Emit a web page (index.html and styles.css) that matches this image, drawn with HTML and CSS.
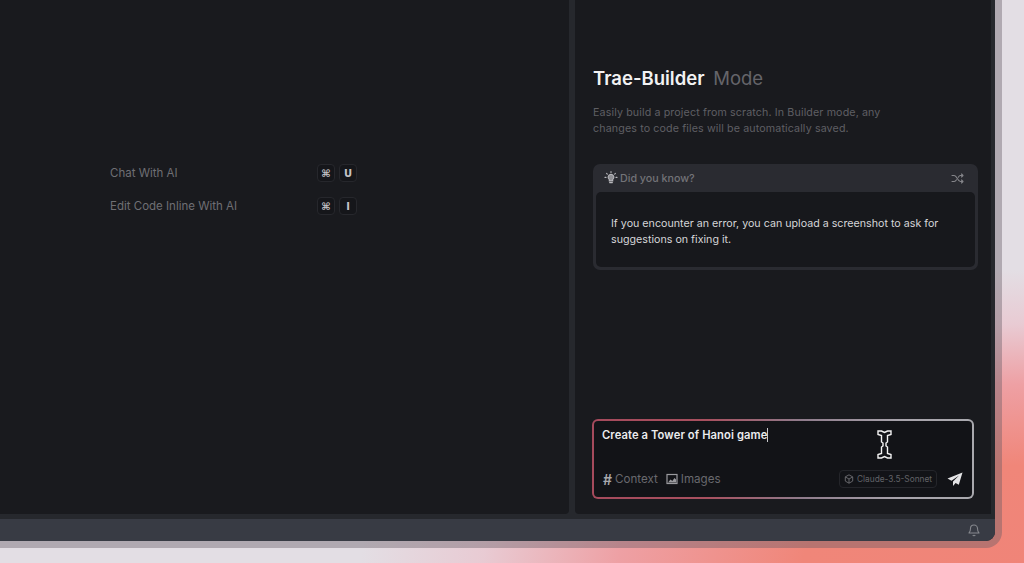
FILE: index.html
```html
<!DOCTYPE html>
<html lang="en">
<head>
    <meta charset="UTF-8">
    <meta name="viewport" content="width=device-width, initial-scale=1.0">
    <title>Trae Builder</title>
    <link rel="stylesheet" href="styles.css">
</head>
<body>
    <div class="window">
        <div class="panels">
            <div class="editor">
                <div class="shortcuts">
                    <div class="shortcut">
                        <span>Chat With AI</span>
                        <div class="keys"><kbd>⌘</kbd><kbd>U</kbd></div>
                    </div>
                    <div class="shortcut">
                        <span>Edit Code Inline With AI</span>
                        <div class="keys"><kbd>⌘</kbd><kbd>I</kbd></div>
                    </div>
                </div>
            </div>
            <div class="builder">
                <h1>Trae-Builder <span>Mode</span></h1>
                <p class="intro">Easily build a project from scratch. In Builder mode, any changes to code files will be automatically saved.</p>

                <div class="tip">
                    <div class="tip-head">
                        <svg class="bulb" width="14" height="14" viewBox="0 0 14 14" fill="none" stroke="#b9b9bd" stroke-width="1.1" stroke-linecap="round">
                            <path d="M7 3.2a3 3 0 0 0-1.7 5.4v1.3h3.4V8.6A3 3 0 0 0 7 3.2z" fill="#8f8f94"/>
                            <path d="M5.6 11.6h2.8M7 .6v1M2.6 2.4l.7.7M11.4 2.4l-.7.7M1 6.4h1M12 6.4h1"/>
                        </svg>
                        <span>Did you know?</span>
                        <svg class="shuffle" width="13" height="13" viewBox="0 0 13 13" fill="none" stroke="#85858a" stroke-width="1.1" stroke-linecap="round" stroke-linejoin="round">
                            <path d="M1 3.5h2.2c2.8 0 3.4 6 6.2 6H12M1 9.5h2.2c1 0 1.700-.7 2.300-1.700M7.300 5.200c.6-1 1.200-1.700 2.100-1.700H12M10.500 2L12 3.500 10.500 5M10.500 8L12 9.500 10.500 11"/>
                        </svg>
                    </div>
                    <div class="tip-body">If you encounter an error, you can upload a screenshot to ask for suggestions on fixing it.</div>
                </div>

                <div class="composer">
                    <div class="prompt">Create a Tower of Hanoi game<i class="caret"></i></div>
                    <div class="composer-foot">
                        <span class="tool"><b class="hash">#</b>Context</span>
                        <span class="tool">
                            <svg width="12" height="12" viewBox="0 0 12 12" fill="none" stroke="#9a9a9e" stroke-width="1.200">
                                <rect x="1" y="1.500" width="10" height="9"/>
                                <path d="M2 9.500l2.500-3 1.800 1.500L8.500 5l1.500 1.500v3z" fill="#9a9a9e" stroke="none"/>
                            </svg>
                            Images
                        </span>
                        <span class="model">
                            <svg width="10" height="10" viewBox="0 0 10 10" fill="none" stroke="#6e6e73" stroke-width=".9" stroke-linejoin="round">
                                <path d="M5 .8l3.700 2.100v4.200L5 9.200 1.300 7.100V2.900zM1.300 2.900L5 5l3.700-2.100M5 5v4.200"/>
                            </svg>
                            Claude-3.5-Sonnet
                        </span>
                        <svg class="send" width="16" height="15" viewBox="0 0 16 15">
                            <path d="M15.500.5L.5 6.500l4 2.200L12 3.500 6 9.500v4.500l2.600-3 3.200 1.700z" fill="#e4e4e6"/>
                        </svg>
                    </div>
                    <svg class="cursor" width="15" height="29" viewBox="0 0 15 29" fill="#15161a" stroke="#f4f4f4" stroke-width="1.400">
                        <path d="M1 1h3.500l3 1.500 3-1.500H14v3.500l-3.500 1V12L9 13v3l1.500 1v6.500l3.500 1V28h-3.500l-3-1.500-3 1.500H1v-3.500l3.500-1V17L6 16v-3l-1.500-1V5.500L1 4.500z"/>
                    </svg>
                </div>
            </div>
        </div>
        <div class="statusbar">
            <svg width="12" height="13" viewBox="0 0 12 13" fill="none" stroke="#85878d" stroke-width="1.100" stroke-linejoin="round">
                <path d="M6 1a3.500 3.500 0 0 0-3.500 3.500c0 3-1.500 4.500-1.500 4.500h10S9.500 7.500 9.500 4.500A3.500 3.500 0 0 0 6 1zM4.800 11a1.300 1.300 0 0 0 2.400 0"/>
            </svg>
        </div>
    </div>
</body>
</html>
```

FILE: styles.css
```css
* {
    box-sizing: border-box;
}
html, body {
    margin: 0;
    height: 100%;
}
body {
    width: 1024px;
    height: 563px;
    overflow: hidden;
    font-family: Inter, "Liberation Sans", sans-serif;
    background:
        radial-gradient(ellipse 680px 300px at 1040px 570px, #f08478 0%, #f08679 35%, #eea0a4 62%, rgba(236,190,200,.6) 82%, rgba(229,221,227,0) 100%),
        #e3dee4;
}
.window {
    width: 995px;
    height: 541px;
    display: flex;
    flex-direction: column;
    background: #26282d;
    border-bottom-right-radius: 9px;
    box-shadow: 0 0 0 7px rgba(100, 90, 100, 0.4);
    overflow: hidden;
}
.panels {
    flex: 1;
    display: flex;
    gap: 6px;
    padding-right: 4px;
    min-height: 0;
}
.editor {
    width: 569px;
    background: #191a1e;
    border-bottom-right-radius: 4px;
    padding: 163px 0 0 110px;
}
.shortcuts {
    width: 247px;
    display: flex;
    flex-direction: column;
    gap: 13px;
}
.shortcut {
    height: 20px;
    display: flex;
    align-items: center;
    justify-content: space-between;
    font-size: 11.500px;
    color: #6f6f74;
}
.keys {
    display: flex;
    gap: 4px;
}
kbd {
    width: 18px;
    height: 18px;
    display: flex;
    align-items: center;
    justify-content: center;
    font-family: "DejaVu Sans", sans-serif;
    font-size: 10px;
    font-weight: bold;
    color: #c4c4c7;
    background: #15161a;
    border: 1px solid #26272c;
    border-radius: 4px;
}
.builder {
    flex: 1;
    display: flex;
    flex-direction: column;
    background: #191a1e;
    border-bottom-left-radius: 4px;
    padding: 66px 13px 0 18px;
}
h1 {
    margin: 0;
    font-size: 18.500px;
    line-height: 24px;
    font-weight: 600;
    color: #f2f2f3;
}
h1 span {
    margin-left: 4px;
    font-weight: 400;
    color: #65656a;
}
.intro {
    margin: 15px 0 0;
    width: 310px;
    font-size: 10.700px;
    letter-spacing: .12px;
    line-height: 16px;
    color: #5f5f64;
}
.tip {
    margin: 27px 0 0;
    height: 106px;
    padding: 0 3px 3px;
    display: flex;
    flex-direction: column;
    background: #2a2b31;
    border-radius: 7px;
}
.tip-head {
    height: 28px;
    flex-shrink: 0;
    display: flex;
    align-items: center;
    padding: 0 9px 0 8px;
    gap: 2px;
    font-size: 10.700px;
    font-weight: 500;
    color: #737378;
}
.shuffle {
    margin: 0 2px 0 auto;
}
.tip-body {
    flex: 1;
    padding: 24px 14px 0 15px;
    font-size: 10.700px;
    line-height: 16px;
    color: #d5d5d8;
    background: #17181c;
    border-radius: 5px;
}
.composer {
    position: relative;
    margin: 149px 0 0 -1px;
    width: 382px;
    height: 80px;
    padding: 7px 8px 0 8px;
    display: flex;
    flex-direction: column;
    justify-content: space-between;
    border: 2px solid transparent;
    border-radius: 6px;
    background:
        linear-gradient(#121317, #121317) padding-box,
        linear-gradient(90deg, #a54a5c 0%, #a8505f 30%, #8f7c8c 55%, #a7a3ab 80%, #a9a9ae 100%) border-box;
}
.prompt {
    font-size: 11.200px;
    letter-spacing: .1px;
    line-height: 14px;
    font-weight: 600;
    color: #ececee;
    display: flex;
    align-items: center;
}
.caret {
    width: 1px;
    height: 14px;
    background: #c8c8cc;
}
.composer-foot {
    display: flex;
    align-items: center;
    gap: 8px;
    padding-bottom: 9px;
}
.tool {
    display: flex;
    align-items: center;
    gap: 3px;
    font-size: 11.600px;
    color: #69696e;
}
.hash {
    margin-left: 1px;
    font-weight: 600;
    font-size: 14px;
    color: #a8a8ac;
}
.model {
    margin-left: auto;
    height: 18px;
    display: flex;
    align-items: center;
    gap: 3px;
    padding: 0 4px;
    font-size: 8.300px;
    color: #636368;
    border: 1px solid #24252a;
    border-radius: 4px;
}
.send {
    margin: 0 1px 0 2px;
}
.cursor {
    position: absolute;
    left: 283px;
    top: 9px;
}
.statusbar {
    height: 27px;
    flex-shrink: 0;
    display: flex;
    align-items: center;
    justify-content: flex-end;
    padding: 0 15px 0 0;
    background: #383b44;
    border-top: 5px solid #26282d;
}
```
